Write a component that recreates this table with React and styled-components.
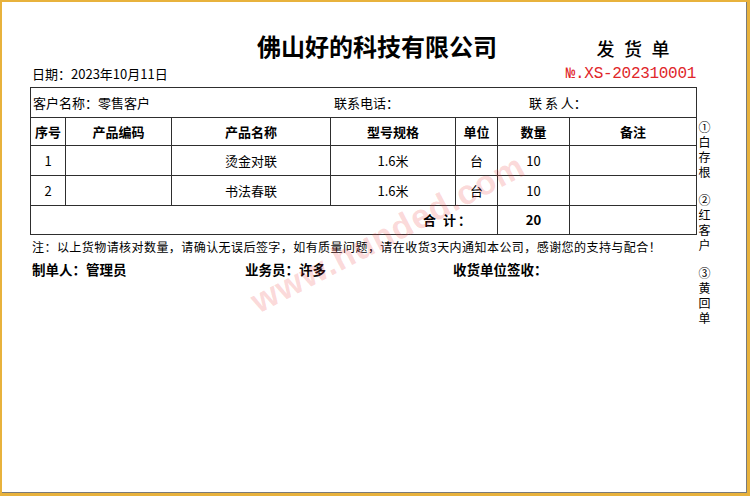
import React from 'react';
import styled, { createGlobalStyle } from 'styled-components';

const Global = createGlobalStyle`
  html, body { margin: 0; padding: 0; background: #fff; }
  body { font-family: "Noto Sans CJK SC", "Liberation Sans", sans-serif; color: #000; }
`;

const Frame = styled.div`
  width: 750px;
  height: 496px;
  box-sizing: border-box;
  background: #e8b23c;
  padding: 2px 3px 3px 2px;
`;

const Sheet = styled.div`
  position: relative;
  height: 100%;
  box-sizing: border-box;
  background: #fff;
  border-right: 1px solid #7a7a7a;
  border-bottom: 1px solid #7a7a7a;
  overflow: hidden;
  display: flex;
  padding-left: 28px;
`;

const Main = styled.div`
  width: 666px;
  display: flex;
  flex-direction: column;
`;

const HeaderRow = styled.div`
  display: flex;
  align-items: center;
  height: 32px;
  margin-top: 30px;
`;

const Title = styled.div`
  margin-left: 227px;
  font-size: 24px;
  font-weight: 700;
  line-height: 30px;
  margin-top: -5px;
`;

const DocType = styled.div`
  margin-left: auto;
  margin-right: 17px;
  font-size: 18px;
  letter-spacing: 9.5px;
  line-height: 24px;
  font-weight: 500;
`;

const DateRow = styled.div`
  display: flex;
  justify-content: space-between;
  align-items: center;
  height: 22px;
  margin-top: -1px;
  padding-left: 2px;
`;

const DateText = styled.span`
  font-size: 13px;
  margin-top: -2px;
`;

const Serial = styled.span`
  font-family: "Liberation Mono", "Noto Sans CJK SC", monospace;
  font-size: 16px;
  color: #e0262a;
  letter-spacing: -0.3px;
`;

const Table = styled.table`
  margin-top: 2px;
  width: 666px;
  border-collapse: collapse;
  table-layout: fixed;
  font-size: 13px;
`;

const Row = styled.tr`
  height: ${p => p.$h}px;
`;

const Cell = styled.td`
  border: 1px solid #2e2e2e;
  padding: 0;
  line-height: 16px;
  text-align: ${p => p.$align || 'center'};
  font-weight: ${p => (p.$bold ? 700 : 400)};
  padding-right: ${p => p.$pr || 0}px;
  letter-spacing: ${p => p.$ls || 0}px;
`;

const CustomerLine = styled.div`
  display: grid;
  grid-template-columns: 301px 195px 1fr;
  padding-left: 2px;
`;

const Note = styled.div`
  margin-top: 4px;
  padding-left: 2px;
  font-size: 12px;
  letter-spacing: 0.44px;
  line-height: 16px;
`;

const SignRow = styled.div`
  display: grid;
  grid-template-columns: 213px 208px 1fr;
  margin-top: 5px;
  padding-left: 2px;
  font-size: 13.5px;
  font-weight: 700;
  line-height: 18px;
`;

const Side = styled.div`
  margin-left: 2px;
  width: 14px;
  padding-top: 117px;
  display: flex;
  flex-direction: column;
  gap: 13px;
`;

const SideLabel = styled.div`
  width: 13px;
  font-size: 12px;
  line-height: 15px;
  text-align: center;
  word-break: break-all;
`;

const Watermark = styled.div`
  position: absolute;
  left: 234px;
  top: 212px;
  transform: rotate(-27.5deg);
  transform-origin: center;
  font-family: "Liberation Sans", sans-serif;
  font-size: 34px;
  font-weight: 700;
  color: rgba(235, 60, 60, 0.2);
  letter-spacing: 1px;
  pointer-events: none;
  white-space: nowrap;
`;

const cols = [35, 106, 159, 125, 42, 72, 127];
const heads = ['序号', '产品编码', '产品名称', '型号规格', '单位', '数量', '备注'];
const rows = [
  { no: '1', code: '', name: '烫金对联', spec: '1.6米', unit: '台', qty: '10', memo: '' },
  { no: '2', code: '', name: '书法春联', spec: '1.6米', unit: '台', qty: '10', memo: '' },
];

export default function App() {
  return (
    <>
      <Global />
      <Frame>
        <Sheet>
          <Main>
            <HeaderRow>
              <Title>佛山好的科技有限公司</Title>
              <DocType>发货单</DocType>
            </HeaderRow>
            <DateRow>
              <DateText>日期：2023年10月11日</DateText>
              <Serial>№.XS-202310001</Serial>
            </DateRow>
            <Table>
              <colgroup>
                {cols.map((w, i) => (
                  <col key={i} style={{ width: w }} />
                ))}
              </colgroup>
              <tbody>
                <Row $h={30}>
                  <Cell colSpan={7} $align="left">
                    <CustomerLine>
                      <span>客户名称：零售客户</span>
                      <span>联系电话：</span>
                      <span>联 系 人：</span>
                    </CustomerLine>
                  </Cell>
                </Row>
                <Row $h={28}>
                  {heads.map(h => (
                    <Cell key={h} $bold>
                      {h}
                    </Cell>
                  ))}
                </Row>
                {rows.map(r => (
                  <Row $h={30} key={r.no}>
                    <Cell>{r.no}</Cell>
                    <Cell>{r.code}</Cell>
                    <Cell>{r.name}</Cell>
                    <Cell>{r.spec}</Cell>
                    <Cell>{r.unit}</Cell>
                    <Cell>{r.qty}</Cell>
                    <Cell>{r.memo}</Cell>
                  </Row>
                ))}
                <Row $h={29}>
                  <Cell colSpan={5} $align="right" $bold $pr={24} $ls={2}>
                    合 计：
                  </Cell>
                  <Cell $bold>20</Cell>
                  <Cell></Cell>
                </Row>
              </tbody>
            </Table>
            <Note>
              注：以上货物请核对数量，请确认无误后签字，如有质量问题，请在收货3天内通知本公司，感谢您的支持与配合！
            </Note>
            <SignRow>
              <span>制单人：管理员</span>
              <span>业务员：许多</span>
              <span>收货单位签收：</span>
            </SignRow>
          </Main>
          <Side>
            <SideLabel>①白存根</SideLabel>
            <SideLabel>②红客户</SideLabel>
            <SideLabel>③黄回单</SideLabel>
          </Side>
          <Watermark>www.hunded.com</Watermark>
        </Sheet>
      </Frame>
    </>
  );
}
